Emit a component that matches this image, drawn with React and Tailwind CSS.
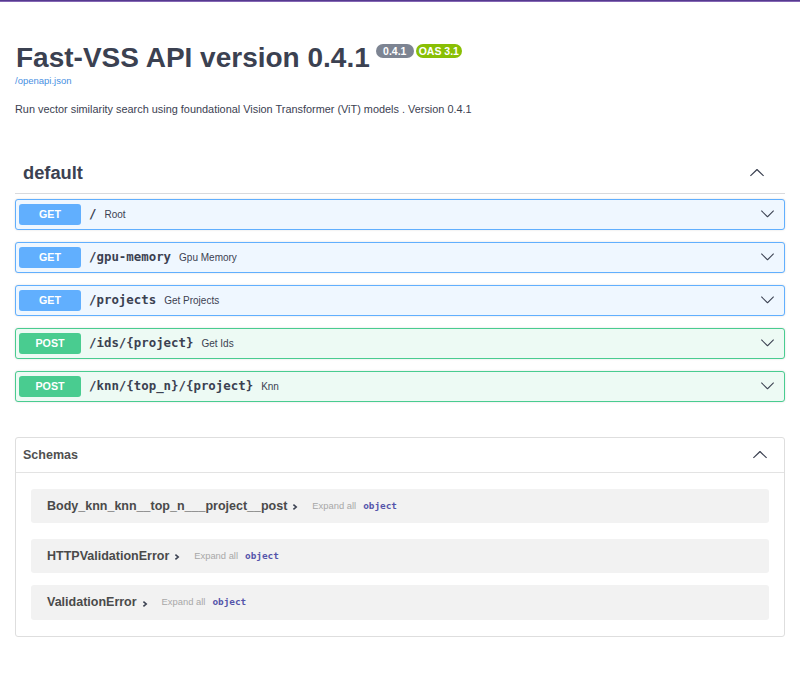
import React from "react";

const sans = { fontFamily: '"Liberation Sans", Arial, sans-serif' };

function ChevronDown({ className = "", up = false }) {
  return (
    <svg
      viewBox="0 0 20 20"
      className={className}
      style={up ? { transform: "rotate(180deg)" } : undefined}
      fill="#3b4151"
    >
      <path d="M17.418 6.109c.272-.268.709-.268.979 0s.271.701 0 .969l-7.908 7.83c-.27.268-.707.268-.979 0l-7.908-7.83c-.27-.268-.27-.701 0-.969.271-.268.709-.268.979 0L10 13.25l7.418-7.141z" />
    </svg>
  );
}

const ops = [
  { m: "GET", path: "/", desc: "Root" },
  { m: "GET", path: "/gpu-memory", desc: "Gpu Memory" },
  { m: "GET", path: "/projects", desc: "Get Projects" },
  { m: "POST", path: "/ids/{project}", desc: "Get Ids" },
  { m: "POST", path: "/knn/{top_n}/{project}", desc: "Knn" },
];

function OpRow({ m, path, desc, first }) {
  const get = m === "GET";
  return (
    <div
      className={`${first ? "mt-[5px]" : "mt-[12px]"} h-[31px] flex items-center pl-[3px] pr-[9px] rounded-[3px] border shadow-[0_0_2px_rgba(0,0,0,0.15)] ${
        get ? "bg-[#eff7ff] border-[#61affe]" : "bg-[#edfaf4] border-[#49cc90]"
      }`}
    >
      <div
        className={`w-[62px] h-[21px] rounded-[3px] flex items-center justify-center text-white font-bold text-[10.7px] ${
          get ? "bg-[#61affe]" : "bg-[#49cc90]"
        }`}
        style={sans}
      >
        {m}
      </div>
      <span
        className="ml-[8px] text-[12.4px] font-bold text-[#3b4151]"
        style={{ fontFamily: '"DejaVu Sans Mono", "Liberation Mono", monospace' }}
      >
        {path}
      </span>
      <span className="ml-[8px] text-[10px] text-[#3b4151]" style={sans}>
        {desc}
      </span>
      <div className="flex-1" />
      <ChevronDown className="w-[15px] h-[15px] mb-[3px]" />
    </div>
  );
}

function ModelRow({ name, mt, h }) {
  return (
    <div className={`${mt} ${h} mx-[15px] rounded-[3px] bg-[#f2f2f2] flex items-center pl-[16px]`}>
      <span className="text-[12.5px] font-bold text-[#4a4a4a]" style={sans}>
        {name}
      </span>
      <svg viewBox="0 0 10 10" className="ml-[4px] w-[8px] h-[8px] mt-[2px]" fill="none" stroke="#3b4151" strokeWidth="2">
        <path d="M3 2l3.5 3L3 8" />
      </svg>
      <span className="ml-[13px] text-[9.4px] text-[#a8a8a8]" style={sans}>
        Expand all
      </span>
      <span
        className="ml-[7px] text-[9.4px] font-bold text-[#5555aa]"
        style={{ fontFamily: '"DejaVu Sans Mono", "Liberation Mono", monospace' }}
      >
        object
      </span>
    </div>
  );
}

export default function App() {
  return (
    <div className="bg-white min-h-[682px] w-full" style={sans}>
      <div className="h-[1px] bg-[#553a8f]" />
      <div className="h-[1px] bg-[#8466b4]" />
      <div className="px-[15px]">
        <div className="mt-[40px] flex items-start">
          <h1 className="text-[28px] leading-[32px] font-bold text-[#3b4151] pl-[1px]" style={sans}>
            Fast-VSS API version 0.4.1
          </h1>
          <div className="ml-[6px] mt-[2px] flex gap-[2px]">
            <span className="w-[38px] h-[14px] rounded-full bg-[#7d8492] text-white font-bold text-[10.5px] leading-[14px] flex items-center justify-center">
              0.4.1
            </span>
            <span className="w-[46px] h-[14px] rounded-full bg-[#89bf04] text-white font-bold text-[10.5px] leading-[14px] flex items-center justify-center">
              OAS 3.1
            </span>
          </div>
        </div>
        <div className="mt-[1px] text-[9.5px] leading-[12px] text-[#4990e2]">/openapi.json</div>
        <div className="mt-[15px] text-[10.9px] leading-[14px] text-[#3b4151]">
          Run vector similarity search using foundational Vision Transformer (ViT) models . Version 0.4.1
        </div>

        <div className="mt-[37px] h-[41px] flex items-center pl-[8px] pr-[20px] border-b border-[#d9dadd]">
          <span className="text-[18.3px] font-bold text-[#3b4151]">default</span>
          <div className="flex-1" />
          <ChevronDown up className="w-[16px] h-[16px]" />
        </div>

        {ops.map((o, i) => (
          <OpRow key={o.path} {...o} first={i === 0} />
        ))}

        <div className="mt-[35px] border border-[#dedede] rounded-[3px] pb-[16px]">
          <div className="h-[35px] flex items-center pl-[7px] pr-[16px] border-b border-[#e3e3e3]">
            <span className="text-[12.5px] font-bold text-[#505050]">Schemas</span>
            <div className="flex-1" />
            <ChevronDown up className="w-[16px] h-[16px]" />
          </div>
          <ModelRow name="Body_knn_knn__top_n___project__post" mt="mt-[16px]" h="h-[34px]" />
          <ModelRow name="HTTPValidationError" mt="mt-[16px]" h="h-[34px]" />
          <ModelRow name="ValidationError" mt="mt-[12px]" h="h-[35px]" />
        </div>
      </div>
    </div>
  );
}
